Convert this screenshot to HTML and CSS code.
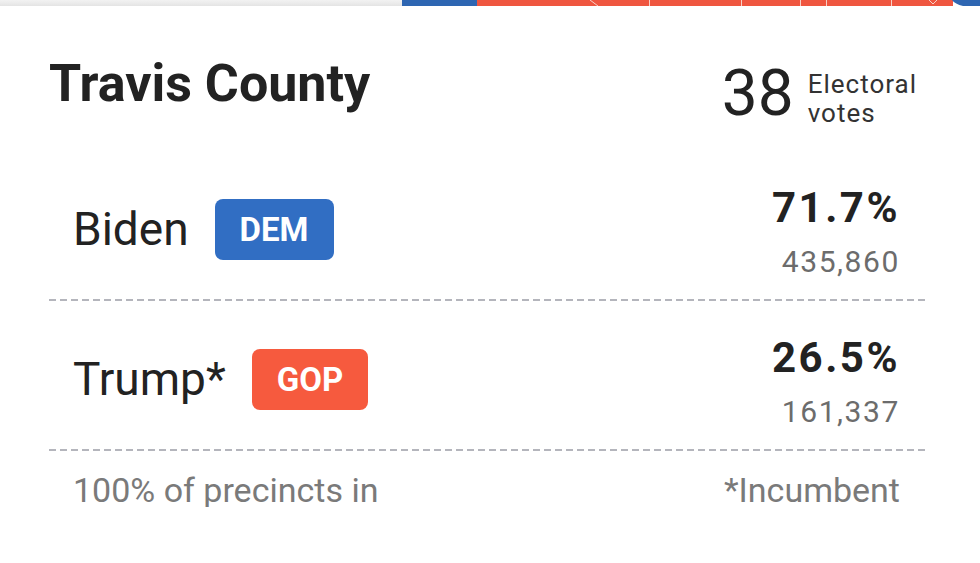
FILE: index.html
```html
<!DOCTYPE html>
<html lang="en">
<head>
<meta charset="utf-8">
<title>Travis County</title>
<link rel="stylesheet" href="styles.css">
</head>
<body>
<div class="map-strip">
  <svg width="980" height="6" viewBox="0 0 980 6" preserveAspectRatio="none">
    <defs>
      <linearGradient id="gr" x1="0" y1="0" x2="0" y2="1">
        <stop offset="0" stop-color="#f2f2f2"/>
        <stop offset="1" stop-color="#e4e4e4"/>
      </linearGradient>
    </defs>
    <rect x="0" y="0" width="402" height="6" fill="url(#gr)"/>
    <rect x="402" y="0" width="75" height="6" fill="#2e66b2"/>
    <rect x="477" y="0" width="476" height="6" fill="#ef5640"/>
    <path d="M952 0 L980 0 L980 6 L963 6 Q955 4 952 0 Z" fill="#2e66b2"/>
    <g stroke="#f8d0c6" stroke-width="1" fill="none">
      <path d="M590 0 L598 6"/>
      <path d="M649.5 0 V6"/>
      <path d="M741.5 0 V6"/>
      <path d="M800.5 0 V6"/>
      <path d="M826.5 0 V6"/>
      <path d="M891.5 0 V6"/>
      <path d="M929 0 L933 4 L937 0"/>
    </g>
  </svg>
</div>
<main class="card">
  <header class="card-head">
    <h1 class="county">Travis County</h1>
    <div class="ev">
      <span class="ev-num">38</span>
      <span class="ev-label"><span class="ev-line">Electoral</span><span class="ev-line">votes</span></span>
    </div>
  </header>
  <div class="cand">
    <div class="cand-name"><span class="name">Biden</span><span class="party dem">DEM</span></div>
    <div class="cand-result"><div class="pct">71.7%</div><div class="votes">435,860</div></div>
  </div>
  <div class="cand">
    <div class="cand-name"><span class="name">Trump*</span><span class="party gop">GOP</span></div>
    <div class="cand-result"><div class="pct">26.5%</div><div class="votes">161,337</div></div>
  </div>
  <footer class="card-foot">
    <span>100% of precincts in</span>
    <span>*Incumbent</span>
  </footer>
</main>
</body>
</html>
```
FILE: styles.css
```css
body {
  margin: 0;
  background: #fff;
  font-family: Roboto, "Liberation Sans", sans-serif;
  color: #222;
}
.map-strip {
  height: 6px;
}
.map-strip svg {
  display: block;
  width: 100%;
  height: 6px;
}
.card {
  padding: 52px 55px 0 49px;
}
.card-head {
  display: flex;
  justify-content: space-between;
  align-items: flex-start;
  padding-right: 8px;
  margin-bottom: 23px;
}
.county {
  margin: 0;
  font-size: 52px;
  line-height: 52px;
  font-weight: 700;
  color: #222;
}
.ev {
  display: flex;
  align-items: flex-start;
  gap: 14px;
}
.ev-num {
  font-size: 64px;
  line-height: 64px;
  margin-top: 4px;
  color: #222;
}
.ev-label {
  display: flex;
  flex-direction: column;
  margin-top: 12px;
  font-size: 26px;
  letter-spacing: 1px;
  color: #333;
}
.ev-line {
  height: 29px;
  line-height: 29px;
}
.cand {
  height: 150px;
  box-sizing: border-box;
  padding: 8px 25px 2px 24px;
  display: flex;
  align-items: center;
  justify-content: space-between;
  background: repeating-linear-gradient(90deg, #b4b5bc 0 7px, transparent 7px 11px) left bottom / 100% 2px no-repeat;
}
.cand-name {
  display: flex;
  align-items: center;
  gap: 26px;
}
.name {
  font-size: 46px;
  line-height: 46px;
  color: #222;
}
.party {
  height: 61px;
  line-height: 61px;
  padding: 0 25px;
  border-radius: 8px;
  color: #fff;
  font-weight: 700;
  font-size: 33px;
}
.dem {
  background: #316ec3;
}
.gop {
  background: #f65a3e;
}
.cand-result {
  text-align: right;
  margin-top: 6px;
}
.pct {
  font-size: 42px;
  line-height: 44px;
  font-weight: 700;
  letter-spacing: 2.5px;
  color: #222;
}
.votes {
  font-size: 30px;
  line-height: 32px;
  margin-top: 16px;
  color: #6c6c6c;
  letter-spacing: 1.6px;
}
.card-foot {
  display: flex;
  justify-content: space-between;
  padding: 22px 25px 0 24px;
  font-size: 34px;
  line-height: 34px;
  color: #7a7a7a;
}
```
